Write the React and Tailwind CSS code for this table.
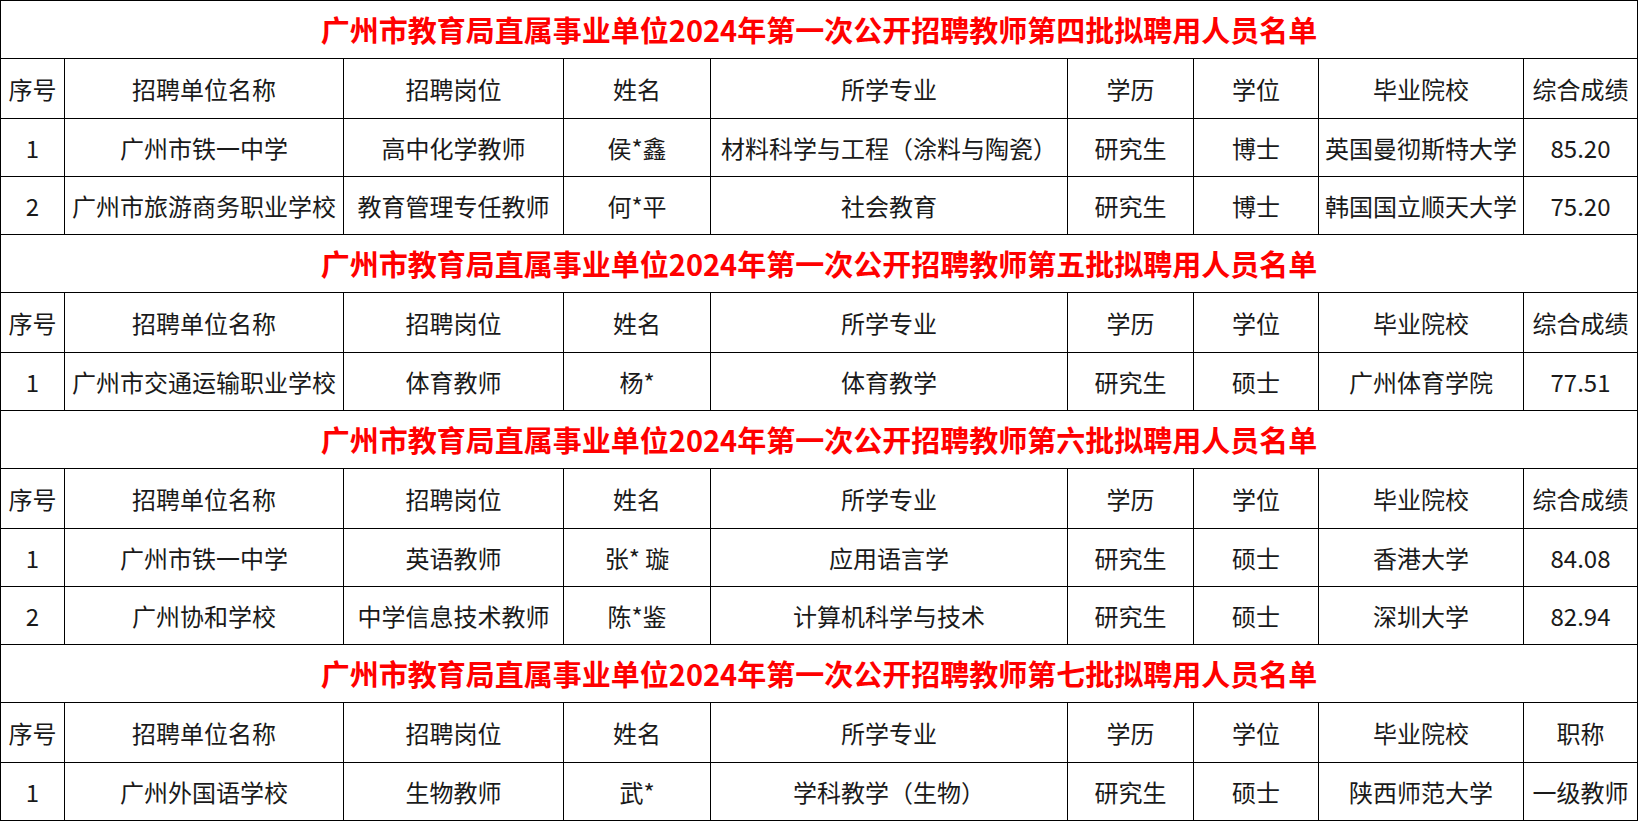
import React from "react";

const cols = [64, 279, 220, 147, 357, 126, 125, 205, 114];

const head = ["序号", "招聘单位名称", "招聘岗位", "姓名", "所学专业", "学历", "学位", "毕业院校"];

const sections = [
  {
    batch: "四",
    last: "综合成绩",
    rows: [
      ["1", "广州市铁一中学", "高中化学教师", "侯*鑫", "材料科学与工程（涂料与陶瓷）", "研究生", "博士", "英国曼彻斯特大学", "85.20"],
      ["2", "广州市旅游商务职业学校", "教育管理专任教师", "何*平", "社会教育", "研究生", "博士", "韩国国立顺天大学", "75.20"],
    ],
  },
  {
    batch: "五",
    last: "综合成绩",
    rows: [
      ["1", "广州市交通运输职业学校", "体育教师", "杨*", "体育教学", "研究生", "硕士", "广州体育学院", "77.51"],
    ],
  },
  {
    batch: "六",
    last: "综合成绩",
    rows: [
      ["1", "广州市铁一中学", "英语教师", "张* 璇", "应用语言学", "研究生", "硕士", "香港大学", "84.08"],
      ["2", "广州协和学校", "中学信息技术教师", "陈*鉴", "计算机科学与技术", "研究生", "硕士", "深圳大学", "82.94"],
    ],
  },
  {
    batch: "七",
    last: "职称",
    rows: [
      ["1", "广州外国语学校", "生物教师", "武*", "学科教学（生物）", "研究生", "硕士", "陕西师范大学", "一级教师"],
    ],
  },
];

const App = () => {
  return (
    <div className="w-[1639px] h-[822px] bg-white overflow-hidden" style={{ fontFamily: '"Noto Sans CJK SC", "Noto Sans", sans-serif' }}>
      <table className="table-fixed border-collapse w-[1638px] text-[24px] text-[#1a1a1a]">
        <colgroup>
          {cols.map((w, i) => (
            <col key={i} style={{ width: w }} />
          ))}
        </colgroup>
        <tbody>
          {sections.map((s, si) => (
            <React.Fragment key={si}>
              <tr className="h-[58px]">
                <td colSpan={9} className="border border-black text-center p-0 text-[29px] font-bold text-[#ff0000] leading-none">
                  广州市教育局直属事业单位2024年第一次公开招聘教师第{s.batch}批拟聘用人员名单
                </td>
              </tr>
              <tr className="h-[60px]">
                {[...head, s.last].map((h, i) => (
                  <td key={i} className="border border-black text-center p-0 leading-none whitespace-nowrap">
                    {h}
                  </td>
                ))}
              </tr>
              {s.rows.map((r, ri) => (
                <tr key={ri} className="h-[58px]">
                  {r.map((c, ci) => (
                    <td key={ci} className="border border-black text-center p-0 leading-none whitespace-nowrap">
                      {c}
                    </td>
                  ))}
                </tr>
              ))}
            </React.Fragment>
          ))}
        </tbody>
      </table>
    </div>
  );
};

export default App;
